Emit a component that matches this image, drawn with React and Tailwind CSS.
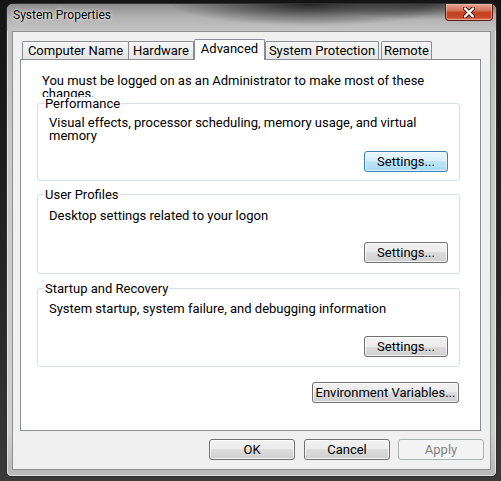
import React from "react";

const btnNormal =
  "h-[21px] rounded-[3px] border border-[#707070] bg-[linear-gradient(to_bottom,#f2f2f2_0%,#ebebeb_50%,#dddddd_50%,#cfcfcf_100%)] shadow-[inset_0_0_0_1px_rgba(255,255,255,0.75)] flex items-center justify-center pb-[1px] text-[13px] leading-[13px] text-black";
const btnHot =
  "h-[21px] rounded-[3px] border border-[#3c7fb1] bg-[linear-gradient(to_bottom,#eaf6fd_0%,#d9f0fc_50%,#bee6fd_50%,#a7d9f5_100%)] shadow-[inset_0_0_0_1px_rgba(255,255,255,0.6)] flex items-center justify-center pb-[1px] text-[13px] leading-[13px] text-black";
const btnDisabled =
  "h-[21px] rounded-[3px] border border-[#adb2b5] bg-[#f4f4f4] flex items-center justify-center pb-[1px] text-[13px] leading-[13px] text-[#838383]";

function Tab({ label, width, selected, extra = "" }) {
  if (selected) {
    return (
      <div
        className={`${width} ${extra} relative z-10 -mb-px h-[21px] border-t border-l border-r border-[#898c95] bg-white rounded-t-[2px] flex justify-center pt-[2px] text-[13px] leading-[13px] text-black`}
      >
        {label}
      </div>
    );
  }
  return (
    <div
      className={`${width} ${extra} h-[18px] border-t border-l border-r border-[#898c95] bg-[linear-gradient(to_bottom,#f6f6f6,#e6e6e6)] shadow-[inset_0_1px_0_#ffffff] rounded-t-[2px] flex justify-center pt-[2px] text-[13px] leading-[13px] text-black`}
    >
      {label}
    </div>
  );
}

function Group({ title, children, mt, textMt, btnMt, pb, hot }) {
  return (
    <fieldset className={`ml-[16px] w-[423px] rounded-[3px] border border-[#d5dfe5] ${mt}`}>
      <legend className="ml-[6px] px-[1px] text-[13px] leading-[13px] text-black">{title}</legend>
      <div className={`${textMt} pl-[11px] w-[400px] text-[13px] leading-[13px] text-black`}>{children}</div>
      <div className={`flex justify-end pr-[11px] ${btnMt} ${pb}`}>
        <div className={`w-[84px] ${hot ? btnHot : btnNormal}`}>Settings...</div>
      </div>
    </fieldset>
  );
}

function CloseX() {
  return (
    <svg width="12" height="11" viewBox="0 0 12 11">
      <path d="M2 1.5 L10 9.5 M10 1.5 L2 9.5" stroke="#4a1508" strokeWidth="4.2" strokeLinecap="round" />
      <path d="M2 1.5 L10 9.5 M10 1.5 L2 9.5" stroke="#ffffff" strokeWidth="2.4" strokeLinecap="round" />
    </svg>
  );
}

export default function App() {
  return (
    <div className="w-[501px] h-[481px] overflow-hidden bg-[linear-gradient(to_bottom,#151515,#262626_60%,#3a3a3a)] pt-[3px] pl-[6px] font-['Roboto',sans-serif]">
      <div className="w-[491px] h-[474px] rounded-t-[7px] rounded-b-[5px] border border-[#2e2e2e] bg-[linear-gradient(to_bottom,#b9b9b9,#c8c8c8_30%,#cfcfcf_90%,#b8b8b8)] shadow-[inset_0_0_0_1px_rgba(255,255,255,0.55)] flex flex-col">
        {/* title bar */}
        <div className="h-[27px] flex justify-between rounded-t-[6px] bg-[radial-gradient(ellipse_140px_22px_at_62%_0%,rgba(20,20,20,0.85),rgba(20,20,20,0)_100%),radial-gradient(ellipse_90px_16px_at_85%_0%,rgba(30,30,30,0.7),rgba(30,30,30,0)_100%),linear-gradient(to_bottom,#8c8c8c_0%,#b0b0b0_45%,#c4c4c4_100%)]">
          <div className="pl-[6px] pt-[4px] text-[12px] leading-[15px] text-black [text-shadow:0_0_5px_rgba(255,255,255,0.9),0_0_2px_rgba(255,255,255,0.8)]">
            System Properties
          </div>
          <div className="mr-[3px] w-[48px] h-[17px] rounded-b-[4px] border border-t-0 border-[#5b1c10] bg-[linear-gradient(to_bottom,#e8a493_0%,#d5735c_40%,#c43f1f_55%,#c84a2a_85%,#e0866a_100%)] shadow-[inset_0_0_0_1px_rgba(255,210,200,0.45)] flex items-center justify-center">
            <CloseX />
          </div>
        </div>

        {/* client area */}
        <div className="ml-[5px] w-[479px] h-[439px] border border-[#8e8f8f] bg-[#f0f0f0] flex flex-col">
          <div className="ml-[7px] mt-[7px] w-[461px] flex flex-col">
            {/* tabs */}
            <div className="flex items-end pl-[2px]">
              <Tab label="Computer Name" width="w-[107px]" />
              <Tab label="Hardware" width="w-[66px]" extra="-ml-px" />
              <Tab label="Advanced" width="w-[71px]" selected />
              <Tab label="System Protection" width="w-[114px]" />
              <Tab label="Remote" width="w-[51px]" extra="ml-[2px]" />
            </div>
            {/* panel */}
            <div className="h-[372px] border border-[#898c95] bg-white flex flex-col">
              <div className="mt-[14px] pl-[21px] h-[23px] overflow-hidden">
                <div className="w-[400px] text-[13px] leading-[13px] text-black">
                  You must be logged on as an Administrator to make most of these changes.
                </div>
              </div>
              <Group title="Performance" mt="" textMt="mt-[6px]" btnMt="mt-[9px]" pb="pb-[8px]" hot>
                Visual effects, processor scheduling, memory usage, and virtual memory
              </Group>
              <Group title="User Profiles" mt="mt-[7px]" textMt="mt-[8px]" btnMt="mt-[20px]" pb="pb-[10px]">
                Desktop settings related to your logon
              </Group>
              <Group title="Startup and Recovery" mt="mt-[8px]" textMt="mt-[7px]" btnMt="mt-[21px]" pb="pb-[9px]">
                System startup, system failure, and debugging information
              </Group>
              <div className="ml-[16px] w-[423px] mt-[15px] flex justify-end pr-[1px]">
                <div className={`w-[147px] ${btnNormal}`}>Environment Variables...</div>
              </div>
            </div>
          </div>
          {/* bottom buttons */}
          <div className="mt-[8px] flex justify-end pr-[6px]">
            <div className={`w-[86px] ${btnNormal}`}>OK</div>
            <div className={`ml-[9px] w-[86px] ${btnNormal}`}>Cancel</div>
            <div className={`ml-[8px] w-[86px] ${btnDisabled}`}>Apply</div>
          </div>
        </div>
      </div>
    </div>
  );
}
